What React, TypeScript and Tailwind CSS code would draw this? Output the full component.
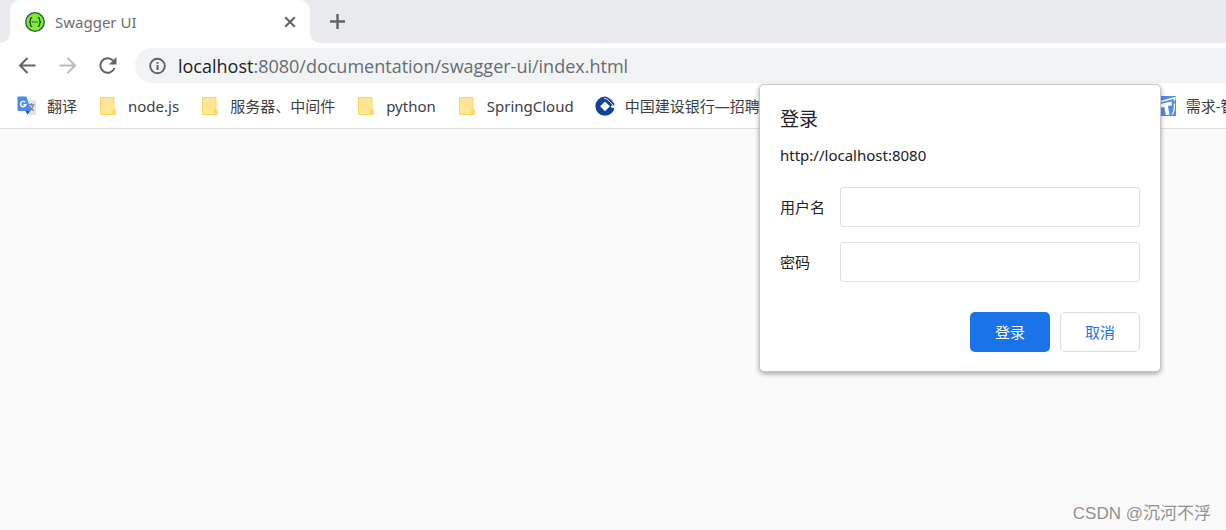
import type { ReactNode } from "react";

function SwaggerIcon() {
  return (
    <svg viewBox="0 0 20 20" className="size-5 shrink-0" aria-hidden="true">
      <circle cx="10" cy="10" r="9.3" fill="#85ea2d" stroke="#1d5a4b" strokeWidth="1.3" />
      <g fill="none" stroke="#173647" strokeWidth="1.3">
        <path d="M7.2 5.6c-1.4 0-1.8.5-1.8 1.6v1.2c0 1-.4 1.5-1.4 1.6 1 .1 1.4.6 1.4 1.6v1.2c0 1.1.4 1.6 1.8 1.6" />
        <path d="M12.8 5.6c1.4 0 1.8.5 1.8 1.6v1.2c0 1 .4 1.5 1.4 1.6-1 .1-1.4.6-1.4 1.6v1.2c0 1.1-.4 1.6-1.8 1.6" />
      </g>
      <g fill="#173647">
        <circle cx="7.8" cy="10" r=".75" />
        <circle cx="10" cy="10" r=".75" />
        <circle cx="12.2" cy="10" r=".75" />
      </g>
    </svg>
  );
}

function FolderIcon() {
  return (
    <svg viewBox="0 0 20 20" className="size-5 shrink-0" aria-hidden="true">
      <path d="M3.2 1h12.1c.7 0 1.200.5 1.200 1.200v11l1.200 1.200v3.200c0 .8-.5 1.400-1.200 1.400H3.200C2.500 19 2 18.500 2 17.800V2.200C2 1.500 2.500 1 3.200 1Z" fill="#fcd859" />
      <path d="M3 2h12.500v11.200l-1.100 1.400V18H3Z" fill="#ffe694" />
      <path d="M15 18v-3.200l1.300-1.200 1 1.200V17c0 .700-.400 1-1 1Z" fill="#ffe48a" stroke="#f6cb45" strokeWidth=".8" />
    </svg>
  );
}

function TranslateIcon() {
  return (
    <svg viewBox="0 0 20 20" className="size-5 shrink-0" aria-hidden="true">
      <path d="M8 4.500h10c.700 0 1 .400 1 1v12.500c0 .600-.400 1-1 1h-5.500Z" fill="#e2e3e5" />
      <g fill="none" stroke="#6f8290" strokeWidth="1.200">
        <path d="M11.500 8.800h6M14.500 7.300v1.500M16.500 9c-.5 2.500-2.200 4.500-4 5.500M12.800 10.200c.8 2 2.200 3.500 4 4.500" />
      </g>
      <path d="M8 14.500h5.500l-2.800 4.200Z" fill="#2f57c9" />
      <path d="M1.500.500h8l4.500 14.500H1.700c-.700 0-1.200-.500-1.200-1.200V1.500c0-.600.400-1 1-1Z" fill="#4c8bf5" />
      <path d="M8.300 6.300A2.700 2.700 0 1 0 8.900 8.600H6.300" fill="none" stroke="#fff" strokeWidth="1.400" />
    </svg>
  );
}

function BankIcon() {
  return (
    <svg viewBox="0 0 20 20" className="size-5 shrink-0" aria-hidden="true">
      <circle cx="10" cy="10.200" r="9.600" fill="#0f439c" />
      <path d="m10 5.400 4.900 4.900-4.900 4.900-4.900-4.900Z" fill="#fff" />
      <path d="M15.800 9.800 20.500 9v3.200l-4-.4Z" fill="#fff" />
      <path d="M9 2.200c2.200.4 3.700 1.300 4.900 2.600l3.900 4.200" fill="none" stroke="#fff" strokeWidth=".9" />
      <path d="M12.500 1.200c2.400.8 4.300 2.600 6.300 5.600" fill="none" stroke="#fff" strokeWidth=".9" />
    </svg>
  );
}

function BoardIcon() {
  return (
    <svg viewBox="0 0 20 20" className="size-5 shrink-0" aria-hidden="true">
      <rect width="20" height="20" fill="#4e8df2" />
      <path d="M1 6.500 19 1.800l-.8 3" fill="none" stroke="#fff" strokeWidth="1.500" />
      <path d="m3 8.200 12.500-2.600.4 3.600-4 .9 1.600 8.400-3.600.6-1.700-8.200-4.600.8Z" fill="#fff" />
      <path d="M18.300 7.500c.4 4-.2 8-2 11" fill="none" stroke="#fff" strokeWidth="1.300" />
    </svg>
  );
}

function Bookmark({ icon, label, className = "" }: { icon: ReactNode; label: string; className?: string }) {
  return (
    <a href="#" className={`flex shrink-0 items-center gap-2.5 text-[15px] text-[#3c4043] ${className}`}>
      {icon}
      <span className="pt-0.5 whitespace-nowrap">{label}</span>
    </a>
  );
}

function TabStrip() {
  return (
    <div className="flex h-[43px] items-center bg-[#e8eaed] pl-2.5">
      <div className="relative flex h-full w-[300px] items-center gap-2.5 rounded-t-[10px] bg-white pr-3.5 pl-[15px]">
        <svg viewBox="0 0 10 10" className="absolute bottom-0 -left-2.5 size-2.5" aria-hidden="true">
          <path d="M10 0v10H0A10 10 0 0 0 10 0Z" fill="#fff" />
        </svg>
        <svg viewBox="0 0 10 10" className="absolute -right-2.5 bottom-0 size-2.5" aria-hidden="true">
          <path d="M0 0v10h10A10 10 0 0 1 0 0Z" fill="#fff" />
        </svg>
        <SwaggerIcon />
        <span className="flex-1 pt-0.5 text-[15px] text-[#6b6e72]">Swagger UI</span>
        <button type="button" aria-label="关闭标签页" className="grid size-3 place-items-center">
          <svg viewBox="0 0 12 12" className="size-3">
            <path d="m1.200 1.200 9.600 9.600m0-9.600-9.600 9.600" stroke="#5f6368" strokeWidth="2" />
          </svg>
        </button>
      </div>
      <button type="button" aria-label="新标签页" className="ml-5 grid size-4 place-items-center">
        <svg viewBox="0 0 16 16" className="size-4">
          <path d="M7.500 0v15M0 7.500h15" stroke="#5f6368" strokeWidth="2.400" />
        </svg>
      </button>
    </div>
  );
}

function Toolbar() {
  return (
    <div className="flex items-center pt-[5px] pl-[17px]">
      <div className="flex shrink-0 items-center gap-5">
        <button type="button" aria-label="后退">
          <svg viewBox="0 0 20 20" className="size-5">
            <path d="M18.500 9.500H3.500M10.500 2 3 9.500l7.500 7.500" fill="none" stroke="#5f6368" strokeWidth="2" />
          </svg>
        </button>
        <button type="button" aria-label="前进">
          <svg viewBox="0 0 20 20" className="size-5">
            <path d="M2.500 9.500h15M10.500 2 18 9.500l-7.500 7.500" fill="none" stroke="#babcbe" strokeWidth="2" />
          </svg>
        </button>
        <button type="button" aria-label="重新加载">
          <svg viewBox="0 0 20 20" className="size-5">
            <path d="M17.500 12A7.300 7.300 0 1 1 16 4.500" fill="none" stroke="#5f6368" strokeWidth="2" />
            <path d="M19.500 1v7.500H12Z" fill="#5f6368" />
          </svg>
        </button>
      </div>
      <label className="ml-[18px] flex h-[35px] flex-1 items-center gap-[11px] rounded-l-full bg-[#f1f3f4] pl-3.5">
        <svg viewBox="0 0 18 18" className="size-[18px] shrink-0" aria-hidden="true">
          <circle cx="8.500" cy="9" r="7.300" fill="none" stroke="#5f6368" strokeWidth="1.900" />
          <path d="M8.500 8v5M8.500 5v1.700" stroke="#5f6368" strokeWidth="2" />
        </svg>
        <span className="font-['Open_Sans',sans-serif] text-lg whitespace-nowrap text-[#686c70]">
          <span className="text-[#202124]">localhost</span>:8080/documentation/swagger-ui/index.html
        </span>
      </label>
    </div>
  );
}

function LoginDialog() {
  const field = "h-10 min-w-0 flex-1 rounded-[3px] border border-[#dfe1e5] bg-white px-2.5 outline-none";
  return (
    <form
      role="dialog"
      aria-labelledby="login-title"
      className="absolute top-[84px] right-[65px] w-[402px] rounded-[5px] border border-[#c4c6c8] bg-white px-5 py-[19px] text-[15px] text-[#202124] shadow-[0_2px_5px_0_#00000055]"
    >
      <h1 id="login-title" className="text-[19px] leading-[30px]">登录</h1>
      <p className="mt-[9px] leading-6">http://localhost:8080</p>
      <div className="mt-5 flex items-center">
        <label htmlFor="username" className="w-[60px]">用户名</label>
        <input id="username" type="text" className={field} />
      </div>
      <div className="mt-[15px] flex items-center">
        <label htmlFor="password" className="w-[60px]">密码</label>
        <input id="password" type="password" className={field} />
      </div>
      <div className="mt-[30px] flex justify-end gap-2.5">
        <button type="submit" className="h-10 w-20 rounded-[5px] bg-[#1a73e8] text-white">登录</button>
        <button type="button" className="h-10 w-20 rounded-[5px] border border-[#dadce0] text-[#1a73e8]">取消</button>
      </div>
    </form>
  );
}

export default function App() {
  return (
    <div className="relative flex min-h-screen flex-col overflow-hidden bg-[#fafafa] font-['Noto_Sans','Noto_Sans_CJK_SC',sans-serif]">
      <header className="bg-white">
        <TabStrip />
        <Toolbar />
        <nav className="flex h-[46px] items-center gap-[21px] overflow-hidden border-b border-[#dadce0] pl-[17px]">
          <Bookmark icon={<TranslateIcon />} label="翻译" />
          <Bookmark icon={<FolderIcon />} label="node.js" />
          <Bookmark icon={<FolderIcon />} label="服务器、中间件" />
          <Bookmark icon={<FolderIcon />} label="python" />
          <Bookmark icon={<FolderIcon />} label="SpringCloud" />
          <Bookmark icon={<BankIcon />} label="中国建设银行—招聘" className="w-[540px]" />
          <Bookmark icon={<BoardIcon />} label="需求-智" />
        </nav>
      </header>
      <main className="flex flex-1 items-end justify-end px-[15px] pb-1">
        <p className="font-['Liberation_Sans','Noto_Sans_CJK_SC',sans-serif] text-[17px] text-[#909192]">CSDN @沉河不浮</p>
      </main>
      <LoginDialog />
    </div>
  );
}
